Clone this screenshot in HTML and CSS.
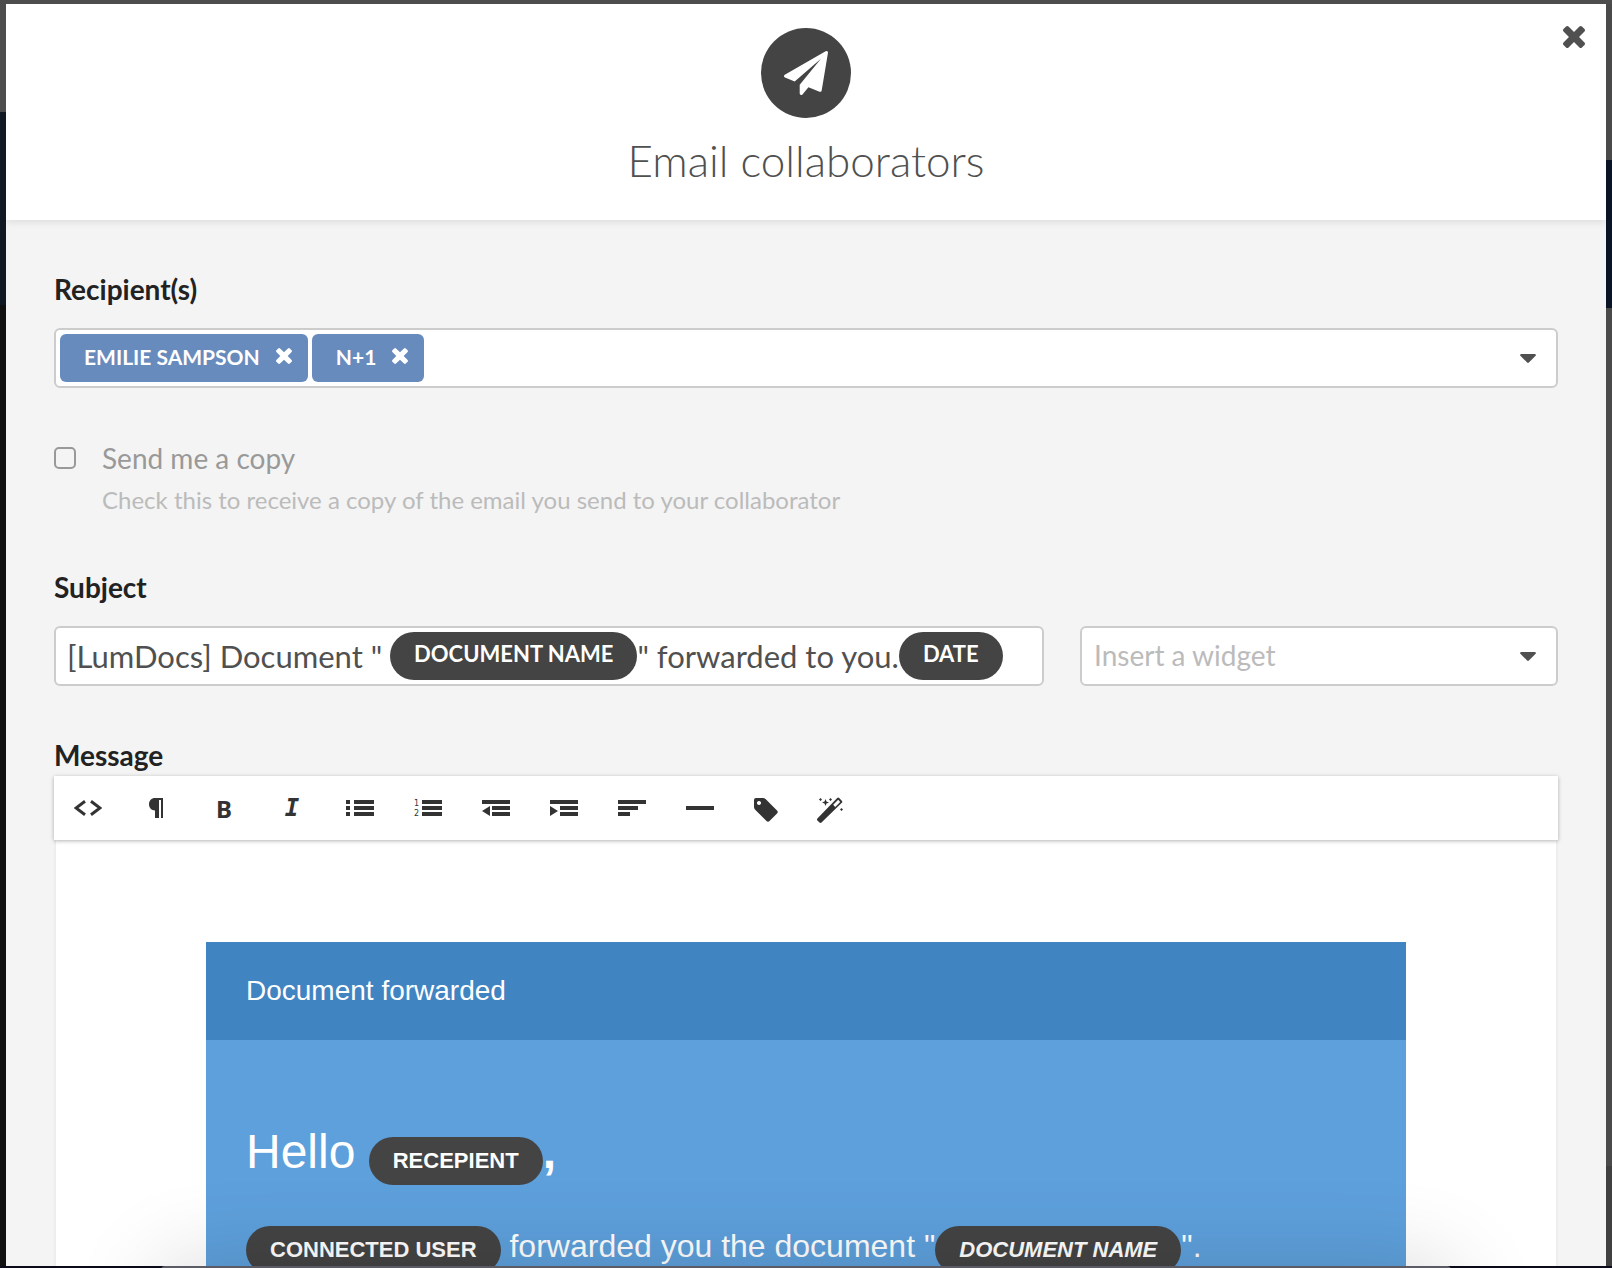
FILE: index.html
```
<!DOCTYPE html>
<html lang="en">
<head>
<meta charset="utf-8">
<title>Email collaborators</title>
<meta name="viewport" content="width=device-width, initial-scale=1">
<link rel="stylesheet" href="styles.css">
</head>
<body>
<svg class="sprite" aria-hidden="true">
  <symbol id="times" viewBox="302 366 1188 1188"><path d="M1490 1322q0 40-28 68l-136 136q-28 28-68 28t-68-28l-294-294-294 294q-28 28-68 28t-68-28l-136-136q-28-28-28-68t28-68l294-294-294-294q-28-28-28-68t28-68l136-136q28-28 68-28t68 28l294 294 294-294q28-28 68-28t68 28l136 136q28 28 28 68t-28 68l-294 294 294 294q28 28 28 68z"/></symbol>
  <symbol id="caret" viewBox="0 0 16 9"><path d="M1 0h14q1.500 .6 .6 1.700L8.900 8.500q-.9 .8-1.800 0L.4 1.700Q-.5 .6 1 0z"/></symbol>
</svg>
<div class="modal" role="dialog" aria-labelledby="title">
  <header class="modal-header">
    <span class="badge">
      <svg class="plane" viewBox="0 0 1792 1792" aria-hidden="true"><path d="M1764 11q33 24 27 64l-256 1536q-5 29-32 45-14 8-31 8-11 0-24-5l-453-185-242 295q-18 23-49 23-13 0-22-4-19-7-30.500-23.500t-11.500-36.500v-349l864-1059-1069 925-395-162q-37-14-40-55-2-40 32-59l1664-960q15-9 32-9 20 0 36 11z"/></svg>
    </span>
    <h1 class="title" id="title">Email collaborators</h1>
    <button class="close" type="button" aria-label="Close"><svg aria-hidden="true"><use href="#times"/></svg></button>
  </header>

  <form class="modal-body">
    <section class="group">
      <span class="label" id="recipients-label">Recipient(s)</span>
      <div class="field recipients" role="group" aria-labelledby="recipients-label">
        <span class="chip">EMILIE SAMPSON <button class="chip-remove" type="button" aria-label="Remove Emilie Sampson"><svg aria-hidden="true"><use href="#times"/></svg></button></span>
        <span class="chip">N+1 <button class="chip-remove" type="button" aria-label="Remove N+1"><svg aria-hidden="true"><use href="#times"/></svg></button></span>
        <button class="toggle" type="button" aria-label="Show recipients"><svg class="caret" aria-hidden="true"><use href="#caret"/></svg></button>
      </div>
    </section>

    <section class="group copy">
      <input class="checkbox" type="checkbox" id="copy" aria-describedby="copy-help">
      <label class="copy-label" for="copy">Send me a copy</label>
      <p class="copy-help" id="copy-help">Check this to receive a copy of the email you send to your collaborator</p>
    </section>

    <section class="group">
      <span class="label" id="subject-label">Subject</span>
      <div class="subject-row">
        <div class="field subject" contenteditable="true" spellcheck="false" role="textbox" aria-labelledby="subject-label">[LumDocs] Document " <span class="pill" contenteditable="false">DOCUMENT NAME</span>" forwarded to you.<span class="pill" contenteditable="false">DATE</span></div>
        <div class="field widget">
          <select class="select" aria-label="Insert a widget"><option>Insert a widget</option></select>
          <svg class="caret" aria-hidden="true"><use href="#caret"/></svg>
        </div>
      </div>
    </section>

    <section class="group message">
      <span class="label" id="message-label">Message</span>
      <div class="toolbar" role="toolbar" aria-label="Formatting">
        <button class="tool" type="button" aria-label="Source"><svg width="28" height="16" viewBox="0 0 28 16"><path class="line" d="M11 1.200L2 8l9 6.800M17 1.200L26 8l-9 6.800"/></svg></button>
        <button class="tool" type="button" aria-label="Paragraph"><svg width="14" height="20" viewBox="0 0 14 20"><path d="M14 0v20h-2V2h-2v18H6v-7.500C2.500 12.500 0 10 0 6.300S2.500 0 6 0z"/></svg></button>
        <button class="tool bold" type="button" aria-label="Bold">B</button>
        <button class="tool italic" type="button" aria-label="Italic">I</button>
        <button class="tool" type="button" aria-label="Bulleted list"><svg width="28" height="16" viewBox="0 0 28 16"><path d="M0 0h4v4H0zM0 6h4v4H0zM0 12h4v4H0zM8 0h20v4H8zM8 6h20v4H8zM8 12h20v4H8z"/></svg></button>
        <button class="tool" type="button" aria-label="Numbered list"><svg class="numbered" width="28" height="16" viewBox="0 0 28 16"><path d="M8 0h20v4H8zM8 6h20v4H8zM8 12h20v4H8z"/><text class="digit" x="0" y="6">1</text><text class="digit" x="0" y="16">2</text></svg></button>
        <button class="tool" type="button" aria-label="Outdent"><svg width="28" height="16" viewBox="0 0 28 16"><path d="M0 0h28v4H0zM10 6h18v4H10zM10 12h18v4H10zM8 6v10L0 11z"/></svg></button>
        <button class="tool" type="button" aria-label="Indent"><svg width="28" height="16" viewBox="0 0 28 16"><path d="M0 0h28v4H0zM10 6h18v4H10zM10 12h18v4H10zM0 6v10l8-5z"/></svg></button>
        <button class="tool" type="button" aria-label="Align"><svg width="28" height="16" viewBox="0 0 28 16"><path d="M0 0h28v4H0zM0 6h20v4H0zM0 12h12v4H0z"/></svg></button>
        <button class="tool" type="button" aria-label="Horizontal line"><svg width="28" height="16" viewBox="0 0 28 16"><path d="M0 6h28v4H0z"/></svg></button>
        <button class="tool narrow" type="button" aria-label="Tag"><svg width="24" height="24" viewBox="0 0 24 24"><path fill-rule="evenodd" d="M2 0h7q1.500 0 2.800 1.200L23 12.500q1.500 1.500 0 3L15.500 23q-1.500 1.500-3 0L1.200 11.800Q0 10.600 0 9V2q0-2 2-2zM5 3a2 2 0 1 0 .01 0z"/></svg></button>
        <button class="tool narrow" type="button" aria-label="Magic"><svg width="26" height="26" viewBox="0 0 26 26"><path fill-rule="evenodd" d="M.4 21.500L20.200 1.100q1-1 2 0l2.600 2.600q1 1 0 2L4.500 25.600q-1 .8-2 0L.4 23.500q-.8-1 0-2zM16.200 7.800l2 2.100 5-5-2-2.100z"/><path d="M8.500 2l1 2.500L12 5.500l-2.500 1-1 2.500-1-2.500-2.500-1 2.500-1zM3.500 1l1.500 1.500L3.500 4 2 2.500zM13.500 1L15 2.500 13.500 4 12 2.500zM24.500 11l1.500 1.500-1.500 1.500-1.500-1.500z"/></svg></button>
      </div>
      <div class="editor" contenteditable="true" spellcheck="false" role="textbox" aria-multiline="true" aria-labelledby="message-label">
        <article class="mail">
          <h2 class="mail-title">Document forwarded</h2>
          <div class="mail-body">
            <p class="hello">Hello <strong><span class="pill" contenteditable="false">RECEPIENT</span>,</strong></p>
            <p class="mail-text"><span class="pill" contenteditable="false">CONNECTED USER</span> forwarded you the document "<em class="pill" contenteditable="false">DOCUMENT NAME</em>".</p>
          </div>
        </article>
      </div>
    </section>
  </form>
</div>
<div class="dock" aria-hidden="true"></div>
</body>
</html>
```
FILE: styles.css
```
* {
  box-sizing: border-box;
}

body {
  margin: 0;
  height: 100vh;
  padding: 4px 6px 2px;
  overflow: hidden;
  font-family: Lato, "Open Sans", sans-serif;
  color: #505050;
  background:
    linear-gradient(#4d4d4d, #4d4d4d) top / 100% 4px no-repeat,
    linear-gradient(#0a0a18, #0a0a18) bottom / 100% 2px no-repeat,
    linear-gradient(#4d4d4d 112px, #101824 112px 305px, #101010 305px) left / 6px 100% no-repeat,
    linear-gradient(#4a4a4a 160px, #0a1424 160px 308px, #4a4a4a 308px 1166px, #404040 1166px) right / 6px 100% no-repeat;
}

h1, h2, p {
  margin: 0;
  font-weight: 400;
}

button, input, select {
  margin: 0;
  padding: 0;
  border: 0;
  background: none;
  color: inherit;
  font: inherit;
}

svg {
  display: block;
  fill: currentColor;
}

.sprite {
  display: none;
}

.modal {
  height: 100%;
  display: flex;
  flex-direction: column;
  overflow: hidden;
  background: #f4f4f4;
}

.modal-header {
  position: relative;
  display: flex;
  flex-direction: column;
  align-items: center;
  gap: 16px;
  padding: 24px 24px 34px;
  background: #fff;
  box-shadow: 0 2px 8px rgba(0, 0, 0, .1);
}

.badge {
  display: grid;
  place-items: center;
  width: 90px;
  height: 90px;
  border-radius: 50%;
  background: #444;
  color: #fff;
}

.plane {
  width: 44px;
  height: 44px;
}

.title {
  font-size: 44px;
  line-height: 52px;
  font-weight: 300;
}

.close {
  position: absolute;
  top: 22px;
  right: 21px;
}

.close svg {
  width: 22px;
  height: 22px;
}

.modal-body {
  padding: 50px 48px 0;
  flex: 1;
  min-height: 0;
}

.group {
  margin-bottom: 50px;
}

.label {
  display: block;
  margin-bottom: 20px;
  font-size: 28px;
  line-height: 38px;
  font-weight: 700;
  color: #222;
}

.message .label {
  margin-bottom: 2px;
}

.field {
  height: 60px;
  border: 2px solid #ccc;
  border-radius: 6px;
  background: #fff;
}

.recipients {
  display: flex;
  align-items: center;
  gap: 4px;
  padding: 0 20px 0 4px;
}

.chip {
  display: flex;
  align-items: center;
  gap: 16px;
  height: 48px;
  padding: 0 16px 4px 24px;
  border-radius: 6px;
  background: #688bbd;
  color: #fff;
  font-size: 21px;
  font-weight: 700;
}

.chip-remove svg {
  width: 16px;
  height: 16px;
}

.toggle {
  margin-left: auto;
}

.caret {
  width: 16px;
  height: 9px;
  color: #505050;
}

.copy {
  display: grid;
  grid-template-columns: 22px 1fr;
  column-gap: 26px;
  align-items: center;
  margin-bottom: 46px;
}

.checkbox {
  appearance: none;
  width: 22px;
  height: 22px;
  border: 2px solid #999;
  border-radius: 5px;
}

.checkbox:checked {
  background: #688bbd;
}

.copy-label {
  font-size: 28px;
  line-height: 40px;
  color: #999;
}

.copy-help {
  grid-column: 2;
  font-size: 24px;
  line-height: 44px;
  color: #bbb;
}

.subject-row {
  display: grid;
  grid-template-columns: 29fr 14fr;
  gap: 36px;
}

.subject {
  padding: 4px 11px;
  font-size: 31px;
  line-height: 48px;
  white-space: nowrap;
  overflow: hidden;
}

.pill {
  display: inline-block;
  height: 48px;
  padding: 0 24px;
  border-radius: 24px;
  background: #444;
  color: #fff;
  font-size: 22px;
  line-height: 44px;
  font-weight: 700;
  vertical-align: top;
}

.widget {
  display: grid;
  align-items: center;
}

.widget > * {
  grid-area: 1 / 1;
}

.widget .caret {
  justify-self: end;
  margin-right: 20px;
  pointer-events: none;
}

.select {
  appearance: none;
  width: 100%;
  height: 100%;
  padding: 0 48px 2px 12px;
  font-size: 28px;
  color: #bbb;
}

.toolbar {
  position: relative;
  display: flex;
  height: 64px;
  background: #fff;
  color: #333;
  box-shadow: 0 1px 4px rgba(0, 0, 0, .3);
}

.tool {
  display: grid;
  place-items: center;
  width: 68px;
}

.narrow {
  width: 64px;
  padding-top: 4px;
}

.line {
  fill: none;
  stroke: currentColor;
  stroke-width: 3;
}

.bold {
  font-family: "Noto Sans", sans-serif;
  font-size: 24px;
  font-weight: 700;
}

.italic {
  font: italic 700 24px "DejaVu Sans Mono", monospace;
}

.numbered {
  overflow: visible;
}

.digit {
  font: 8px "DejaVu Sans", sans-serif;
}

.editor {
  padding: 102px 24px 48px;
  border: 2px solid #eee;
  border-top: 0;
  background: #fff;
}

.mail {
  max-width: 1200px;
  margin: 0 auto;
  font-family: "Liberation Sans", Arial, sans-serif;
  background: #5ea0dc;
  color: #fff;
}

.mail .pill {
  line-height: 48px;
  vertical-align: baseline;
}

.mail-title {
  padding: 24px 40px;
  background: #4084c2;
  font-size: 28px;
  line-height: 50px;
}

.mail-body {
  padding: 76px 40px 64px;
}

.hello {
  margin-bottom: 34px;
  font-size: 48px;
  line-height: 72px;
}

.mail-text {
  font-size: 32px;
  line-height: 48px;
}

/* Floating panel that starts at the bottom edge of the window */
.dock {
  position: fixed;
  left: 10%;
  right: 10%;
  bottom: -200px;
  height: 202px;
  border-radius: 4px;
  background: #5b5b66;
  box-shadow: 0 0 90px rgba(0, 0, 0, .16);
}
```
